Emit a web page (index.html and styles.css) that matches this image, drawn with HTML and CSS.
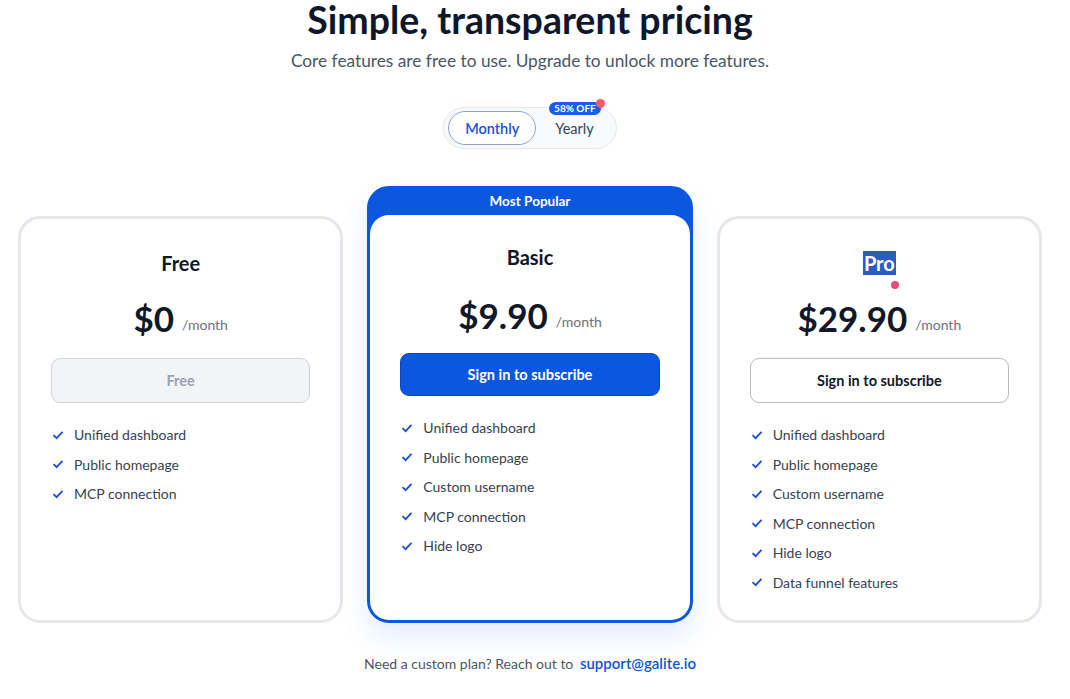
FILE: index.html
```html
<!DOCTYPE html>
<html>
  <head>
    <title>Pricing</title>
    <link rel="stylesheet" href="styles.css">
  </head>
  <body>
    <div class="page">
      <h1 class="title">Simple, transparent pricing</h1>
      <p class="subtitle">Core features are free to use. Upgrade to unlock more features.</p>

      <div class="toggle-wrap">
        <div class="toggle">
          <button class="toggle-btn active">Monthly</button>
          <button class="toggle-btn">Yearly</button>
          <span class="discount">58% OFF</span>
          <span class="discount-dot"></span>
        </div>
      </div>

      <div class="plans">
        <!-- Free -->
        <div class="plan">
          <h3 class="plan-name">Free</h3>
          <div class="price"><span class="amount">$0</span><span class="per">/month</span></div>
          <button class="plan-btn disabled">Free</button>
          <ul class="features">
            <li><svg class="check" viewBox="0 0 12 10"><path d="M1.5 5.2 4.6 8.2 10.5 1.8"/></svg>Unified dashboard</li>
            <li><svg class="check" viewBox="0 0 12 10"><path d="M1.5 5.2 4.6 8.2 10.5 1.8"/></svg>Public homepage</li>
            <li><svg class="check" viewBox="0 0 12 10"><path d="M1.5 5.2 4.6 8.2 10.5 1.8"/></svg>MCP connection</li>
          </ul>
        </div>

        <!-- Basic -->
        <div class="plan popular">
          <div class="popular-label">Most Popular</div>
          <div class="plan-inner">
            <h3 class="plan-name">Basic</h3>
            <div class="price"><span class="amount">$9.90</span><span class="per">/month</span></div>
            <button class="plan-btn primary">Sign in to subscribe</button>
            <ul class="features">
              <li><svg class="check" viewBox="0 0 12 10"><path d="M1.5 5.2 4.6 8.2 10.5 1.8"/></svg>Unified dashboard</li>
              <li><svg class="check" viewBox="0 0 12 10"><path d="M1.5 5.2 4.6 8.2 10.5 1.8"/></svg>Public homepage</li>
              <li><svg class="check" viewBox="0 0 12 10"><path d="M1.5 5.2 4.6 8.2 10.5 1.8"/></svg>Custom username</li>
              <li><svg class="check" viewBox="0 0 12 10"><path d="M1.5 5.2 4.6 8.2 10.5 1.8"/></svg>MCP connection</li>
              <li><svg class="check" viewBox="0 0 12 10"><path d="M1.5 5.2 4.6 8.2 10.5 1.8"/></svg>Hide logo</li>
            </ul>
          </div>
        </div>

        <!-- Pro -->
        <div class="plan">
          <h3 class="plan-name pro-name"><span class="pro-tag">Pro<span class="pro-dot"></span></span></h3>
          <div class="price"><span class="amount">$29.90</span><span class="per">/month</span></div>
          <button class="plan-btn outline">Sign in to subscribe</button>
          <ul class="features">
            <li><svg class="check" viewBox="0 0 12 10"><path d="M1.5 5.2 4.6 8.2 10.5 1.8"/></svg>Unified dashboard</li>
            <li><svg class="check" viewBox="0 0 12 10"><path d="M1.5 5.2 4.6 8.2 10.5 1.8"/></svg>Public homepage</li>
            <li><svg class="check" viewBox="0 0 12 10"><path d="M1.5 5.2 4.6 8.2 10.5 1.8"/></svg>Custom username</li>
            <li><svg class="check" viewBox="0 0 12 10"><path d="M1.5 5.2 4.6 8.2 10.5 1.8"/></svg>MCP connection</li>
            <li><svg class="check" viewBox="0 0 12 10"><path d="M1.5 5.2 4.6 8.2 10.5 1.8"/></svg>Hide logo</li>
            <li><svg class="check" viewBox="0 0 12 10"><path d="M1.5 5.2 4.6 8.2 10.5 1.8"/></svg>Data funnel features</li>
          </ul>
        </div>
      </div>

      <p class="contact">Need a custom plan? Reach out to <a href="mailto:support@galite.io">support@galite.io</a></p>
    </div>
  </body>
</html>
```

FILE: styles.css
```css
body {
  margin: 0;
  font-family: Lato, "Noto Sans", sans-serif;
  color: #111827;
  background: #fff;
}

.page {
  width: 1024px;
  margin: 0 0 0 18px;
  text-align: center;
}

.title {
  margin: 0;
  font-size: 37.5px;
  font-weight: 700;
  line-height: 40px;
  color: #0f172a;
}

.subtitle {
  margin: 8px 0 0;
  font-size: 17.3px;
  line-height: 26px;
  color: #4b5563;
}

.toggle-wrap {
  display: flex;
  justify-content: center;
  margin-top: 33px;
}

.toggle {
  position: relative;
  display: flex;
  align-items: center;
  gap: 4px;
  padding: 3px;
  border: 1px solid #e5e7eb;
  border-radius: 22px;
  background: #f9fafb;
}

.toggle-btn {
  font-family: inherit;
  font-size: 14.5px;
  height: 34px;
  padding: 0 18px 0 14px;
  border: 1px solid transparent;
  border-radius: 18px;
  background: none;
  color: #374151;
  cursor: pointer;
}

.toggle-btn.active {
  width: 88px;
  padding: 0;
  margin-left: 1px;
  background: #fff;
  border-color: #8fa3c9;
  color: #1d4ed8;
  font-weight: 600;
}

.discount {
  position: absolute;
  top: -6px;
  right: 15px;
  padding: 0 5px;
  border-radius: 8px;
  background: #1a5fe0;
  color: #fff;
  font-size: 10px;
  font-weight: 700;
  line-height: 13px;
}

.discount-dot {
  position: absolute;
  top: -9px;
  right: 11px;
  width: 9px;
  height: 9px;
  border-radius: 50%;
  background: #f05a6a;
}

.plans {
  display: grid;
  grid-template-columns: repeat(3, 1fr);
  gap: 24px;
  align-items: end;
  margin-top: 37px;
}

.plan {
  height: 407px;
  box-sizing: border-box;
  padding: 30px 30px;
  border: 3px solid #e5e7eb;
  border-radius: 22px;
  background: #fff;
}

.plan-name {
  margin: 0;
  font-size: 20px;
  font-weight: 700;
  line-height: 28px;
}

.price {
  display: flex;
  justify-content: center;
  align-items: baseline;
  gap: 8px;
  margin-top: 22px;
  height: 38px;
}

.amount {
  font-size: 35px;
  font-weight: 700;
  line-height: 38px;
}

.per {
  position: relative;
  top: -2px;
  font-size: 14px;
  color: #6b7280;
}

.plan-btn {
  display: block;
  width: 100%;
  height: 45px;
  margin-top: 21px;
  font-family: inherit;
  font-size: 14.5px;
  font-weight: 700;
  border-radius: 9px;
  cursor: pointer;
}

.plan-btn.disabled {
  background: #f3f4f6;
  border: 1px solid #d1d5db;
  color: #9ca3af;
  cursor: default;
}

.plan-btn.primary {
  height: 43px;
  background: #0b57e0;
  border: 1px solid #0a47b8;
  color: #fff;
}

.plan-btn.outline {
  background: #fff;
  border: 1px solid #b6bcc6;
  color: #111827;
}

.features {
  list-style: none;
  margin: 17px 0 0;
  padding: 0;
  text-align: left;
}

.features li {
  display: flex;
  align-items: center;
  height: 29.5px;
  font-size: 14px;
  color: #374151;
}

.check {
  width: 12px;
  height: 10px;
  margin: 0 10px 0 1px;
  fill: none;
  stroke: #1d4ed8;
  stroke-width: 1.8;
}

/* highlighted plan */
.plan.popular {
  height: 437px;
  padding: 0;
  border-color: #0b57e0;
  background: #0b57e0;
  box-shadow: 0 14px 28px rgba(37, 99, 235, 0.12);
  display: flex;
  flex-direction: column;
}

.popular-label {
  height: 26px;
  line-height: 25px;
  color: #fff;
  font-size: 13.5px;
  font-weight: 700;
}

.plan-inner {
  flex: 1;
  padding: 28px 30px 30px;
  border-radius: 19px;
  background: #fff;
}

.plan-inner .price {
  margin-top: 25px;
}

.plan-inner .plan-btn {
  margin-top: 19px;
}

.pro-tag {
  position: relative;
  display: inline-block;
  padding: 0 1px;
  background: #2a5cc4;
  color: #fff;
  line-height: 24px;
}

/* small status dot under the Pro tag */
.pro-dot {
  position: absolute;
  left: 28px;
  top: 30px;
  width: 8px;
  height: 8px;
  border-radius: 50%;
  background: #e84a7a;
}

.pro-name + .price {
  margin-top: 22px;
}

.contact {
  margin: 31px 0 0;
  font-size: 14px;
  color: #4b5563;
}

.contact a {
  margin-left: 3px;
  color: #0b57d0;
  font-size: 15px;
  font-weight: 600;
  text-decoration: none;
}
```
